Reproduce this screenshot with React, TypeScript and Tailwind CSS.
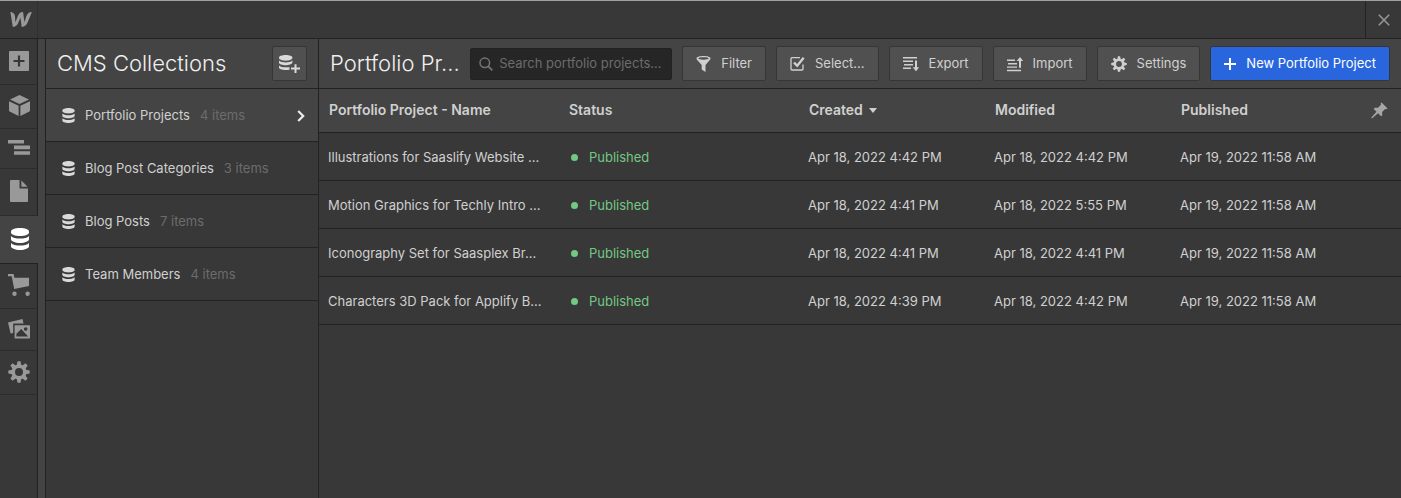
import React from 'react';

interface IconProps {
    className?: string;
}

interface Collection {
    name: string;
    count: number;
    active?: boolean;
}

interface Project {
    name: string;
    status: string;
    created: string;
    modified: string;
    published: string;
}

const collections: Collection[] = [
    { name: 'Portfolio Projects', count: 4, active: true },
    { name: 'Blog Post Categories', count: 3 },
    { name: 'Blog Posts', count: 7 },
    { name: 'Team Members', count: 4 },
];

const projects: Project[] = [
    { name: 'Illustrations for Saaslify Website ...', status: 'Published', created: 'Apr 18, 2022 4:42 PM', modified: 'Apr 18, 2022 4:42 PM', published: 'Apr 19, 2022 11:58 AM' },
    { name: 'Motion Graphics for Techly Intro ...', status: 'Published', created: 'Apr 18, 2022 4:41 PM', modified: 'Apr 18, 2022 5:55 PM', published: 'Apr 19, 2022 11:58 AM' },
    { name: 'Iconography Set for Saasplex Br...', status: 'Published', created: 'Apr 18, 2022 4:41 PM', modified: 'Apr 18, 2022 4:41 PM', published: 'Apr 19, 2022 11:58 AM' },
    { name: 'Characters 3D Pack for Applify B...', status: 'Published', created: 'Apr 18, 2022 4:39 PM', modified: 'Apr 18, 2022 4:42 PM', published: 'Apr 19, 2022 11:58 AM' },
];

const LogoIcon = ({ className }: IconProps) => (
    <svg viewBox="0 3.9 24 16.3" fill="currentColor" className={className} aria-hidden="true">
        <path d="M17.803 8.56s-1.917 6.01-2.076 6.512c-.058-.503-1.45-11.156-1.45-11.156-3.24 0-4.967 2.305-5.885 4.74 0 0-2.312 5.989-2.504 6.487-.013-.473-.35-6.429-.35-6.429C5.344 5.733 2.614 3.916.4 3.916l2.667 16.199c3.4-.015 5.23-2.312 6.19-4.742 0 0 2.04-5.29 2.124-5.529.015.228 1.465 10.271 1.465 10.271 3.411 0 5.252-2.152 6.245-4.497l4.783-11.702c-3.372 0-5.138 2.298-6.07 4.644z" />
    </svg>
);

const AddIcon = ({ className }: IconProps) => (
    <svg viewBox="0 0 20 20" fill="currentColor" fillRule="evenodd" className={className} aria-hidden="true">
        <path d="M1 0h18a1 1 0 0 1 1 1v18a1 1 0 0 1-1 1H1a1 1 0 0 1-1-1V1a1 1 0 0 1 1-1zm7.900 4.500v4.400H4.500v2.200h4.400v4.400h2.200v-4.400h4.400V8.900h-4.400V4.500z" />
    </svg>
);

const CubeIcon = ({ className }: IconProps) => (
    <svg viewBox="0 0 21 21" fill="currentColor" className={className} aria-hidden="true">
        <path d="M10.5 0 20 4.500 10.500 9 1 4.500z" />
        <path d="M0 6.200 9.600 10.700V21L.6 16.600Q0 16.300 0 15.600z" />
        <path d="M21 6.200 11.400 10.700V21l9-4.400q.6-.3.6-1z" />
    </svg>
);

const NavigatorIcon = ({ className }: IconProps) => (
    <svg viewBox="0 0 22 15" fill="currentColor" className={className} aria-hidden="true">
        <path d="M0 0h16v3.600H0zM6 5.600h16v3.600H6zM6 11.200h16v3.600H6z" />
    </svg>
);

const PageIcon = ({ className }: IconProps) => (
    <svg viewBox="0 0 18 22" fill="currentColor" className={className} aria-hidden="true">
        <path d="M1 0h8.500v8.500H18V21a1 1 0 0 1-1 1H1a1 1 0 0 1-1-1V1a1 1 0 0 1 1-1z" />
        <path d="M11.400.5 17.600 6.700h-6.200z" />
    </svg>
);

const DatabaseIcon = ({ className }: IconProps) => (
    <svg viewBox="0 0 18 22" fill="currentColor" className={className} aria-hidden="true">
        <path d="M0 3.500C0 1.500 4 0 9 0s9 1.500 9 3.500v1C18 6.500 14 8 9 8S0 6.500 0 4.500z" />
        <path d="M0 8c1.500 1.800 5 2.600 9 2.600s7.500-.8 9-2.600v3.300c0 2-4 3.700-9 3.700s-9-1.700-9-3.700z" />
        <path d="M0 15c1.500 1.800 5 2.600 9 2.600s7.500-.8 9-2.600v3.300c0 2-4 3.700-9 3.700s-9-1.700-9-3.700z" />
    </svg>
);

const CartIcon = ({ className }: IconProps) => (
    <svg viewBox="0 0 22 22" fill="currentColor" className={className} aria-hidden="true">
        <path d="M0 0h5.600l.8 3.700H21V12L6.200 15 3.700 2.200H0z" />
        <circle cx="6.5" cy="19.7" r="2.2" />
        <circle cx="19.6" cy="19.7" r="2.2" />
    </svg>
);

const AssetsIcon = ({ className }: IconProps) => (
    <svg viewBox="0 0 22 20" fill="currentColor" className={className} aria-hidden="true">
        <path d="M0 3.500 14.500 0l1 4.500H5.200v9.500l-2.600.5z" />
        <path fillRule="evenodd" d="M7.200 6.200h14.200q.6 0 .6.600v12q0 .6-.6.600H7.200q-.6 0-.6-.6v-12q0-.6.6-.6zM8.400 17.600h11.800l-7-7.600-4.800 4.800zM17.700 8.300a1.800 1.800 0 1 0 0 3.600 1.800 1.800 0 0 0 0-3.600z" />
    </svg>
);

const GearIcon = ({ className }: IconProps) => (
    <svg viewBox="0 0 22 22" fill="currentColor" className={className} aria-hidden="true">
        <circle cx="11" cy="11" r="5.8" fill="none" stroke="currentColor" strokeWidth="3.6" />
        {[0, 45, 90, 135, 180, 225, 270, 315].map((angle) => (
            <path key={angle} d="M9.500.3h3l.8 4.200H8.700z" transform={`rotate(${angle} 11 11)`} />
        ))}
    </svg>
);

const DatabaseAddIcon = ({ className }: IconProps) => (
    <svg viewBox="0 0 21 18" fill="currentColor" className={className} aria-hidden="true">
        <path d="M0 2.600C0 1.100 3 0 6.700 0s6.700 1.100 6.700 2.600v.5c0 1.500-3 2.600-6.700 2.600S0 4.600 0 3.100z" />
        <path d="M0 5.600c1.500 1.400 4 1.900 6.700 1.900s5.200-.5 6.700-1.900v2.200c-.6 1.600-3.500 2.500-6.700 2.500S0 9.300 0 7.800z" />
        <path d="M0 10.400c1.500 1.400 4 1.900 6.700 1.900h3.800v2.500c-1 .2-2.400.3-3.800.3-3.700 0-6.700-1-6.700-2.500z" />
        <path d="M15.500 9.300h2v3.300h3.500v2h-3.500V18h-2v-3.400H12v-2h3.500z" />
    </svg>
);

const SearchIcon = ({ className }: IconProps) => (
    <svg viewBox="0 0 14 14" fill="none" stroke="currentColor" strokeWidth="1.5" className={className} aria-hidden="true">
        <circle cx="5.8" cy="5.8" r="4.8" />
        <path d="m9.300 9.300 4 4" strokeWidth="1.8" />
    </svg>
);

const FilterIcon = ({ className }: IconProps) => (
    <svg viewBox="0 0 14 16" fill="currentColor" className={className} aria-hidden="true">
        <path fillRule="evenodd" d="M7 0c3.900 0 7 .9 7 2.400 0 .7-.5 1.400-1.200 2.200L9 9v7l-3.800-2.400V9L1.200 4.600C.5 3.800 0 3.100 0 2.400 0 .9 3.100 0 7 0zm0 1.300c-2.900 0-5.200.5-5.200 1.200S4.100 3.700 7 3.700s5.200-.5 5.200-1.200S9.900 1.300 7 1.300z" />
    </svg>
);

const SelectIcon = ({ className }: IconProps) => (
    <svg viewBox="0 0 15 15" fill="none" stroke="currentColor" className={className} aria-hidden="true">
        <path d="M10 1.700H2q-1 0-1 1V13q0 1 1 1h10q1 0 1-1V8.500" strokeWidth="1.3" />
        <path d="m4 6.500 3.200 3.300L13.700 1.800" strokeWidth="2.4" />
    </svg>
);

const ExportIcon = ({ className }: IconProps) => (
    <svg viewBox="0 0 16 16" fill="currentColor" className={className} aria-hidden="true">
        <path d="M0 1h14v1.400H0zM0 4.500h10v1.400H0zM1 8h9v1.400H1zM0 11.500h8v1.400H0z" />
        <path d="M12 4.500h2v6.800h2.200L13 15.300l-3.300-4H12z" />
    </svg>
);

const ImportIcon = ({ className }: IconProps) => (
    <svg viewBox="0 0 16 16" fill="currentColor" className={className} aria-hidden="true">
        <path d="M0 3.600h8V5H0zM1 7h9v1.400H1zM0 10.400h10v1.400H0zM0 13.800h14v1.400H0z" />
        <path d="M12 11.800h2V5h2.200L13 1 9.700 5H12z" />
    </svg>
);

const PlusIcon = ({ className }: IconProps) => (
    <svg viewBox="0 0 12 12" fill="currentColor" className={className} aria-hidden="true">
        <path d="M5 0h2v5h5v2H7v5H5V7H0V5h5z" />
    </svg>
);

const CloseIcon = ({ className }: IconProps) => (
    <svg viewBox="0 0 12 12" fill="none" stroke="currentColor" strokeWidth="1.5" className={className} aria-hidden="true">
        <path d="m.8.8 10.400 10.400M11.200.8.8 11.200" />
    </svg>
);

const ChevronIcon = ({ className }: IconProps) => (
    <svg viewBox="0 0 8 12" fill="none" stroke="currentColor" strokeWidth="2.2" className={className} aria-hidden="true">
        <path d="m1.200 1 5 5-5 5" />
    </svg>
);

const PinIcon = ({ className }: IconProps) => (
    <svg viewBox="0 0 18 18" fill="currentColor" className={className} aria-hidden="true">
        <path d="M11.200.5 17.500 6.800 16.300 7.800 15 7.400 11.800 10.600 11.900 14.200 10.700 15.200 7.500 12 1.200 17.200.2 16.900.6 16.200 5.800 10.300 2.900 7.400 3.900 6.200 7.400 6.200 10.600 3 10.200 1.700z" />
    </svg>
);

const railItems = [
    { label: 'Add elements', icon: <AddIcon className="size-5" />, height: 'h-[46px]' },
    { label: 'Components', icon: <CubeIcon className="size-[21px]" />, height: 'h-11' },
    { label: 'Navigator', icon: <NavigatorIcon className="h-[15px] w-[22px]" />, height: 'h-10' },
    { label: 'Pages', icon: <PageIcon className="h-[22px] w-[18px]" />, height: 'h-[47px]' },
    { label: 'CMS', icon: <DatabaseIcon className="h-[22px] w-[18px]" />, height: 'h-12', active: true },
    { label: 'Ecommerce', icon: <CartIcon className="size-[22px]" />, height: 'h-[45px]' },
    { label: 'Assets', icon: <AssetsIcon className="h-5 w-[22px]" />, height: 'h-[42px]' },
    { label: 'Settings', icon: <GearIcon className="size-[22px]" />, height: 'h-11' },
];

const actions = [
    { label: 'Filter', icon: <FilterIcon className="h-4 w-[15px]" /> },
    { label: 'Select...', icon: <SelectIcon className="size-[15px]" /> },
    { label: 'Export', icon: <ExportIcon className="size-4" /> },
    { label: 'Import', icon: <ImportIcon className="size-4" /> },
    { label: 'Settings', icon: <GearIcon className="size-4" /> },
];

const Rail = () => (
    <nav className="flex w-[38px] flex-none flex-col bg-[#444]">
        {railItems.map((item) => (
            <button
                key={item.label}
                type="button"
                aria-label={item.label}
                className={`flex flex-none items-center justify-center border-b pb-[2px] pl-px ${item.height} ${
                    item.active
                        ? 'border-b-[#222] bg-[#444] text-white'
                        : 'border-r border-r-[#222] border-b-[#2c2c2c] bg-[#383838] text-[#999]'
                }`}
            >
                {item.icon}
            </button>
        ))}
        <div className="flex-1 border-r border-[#222] bg-[#383838]" />
    </nav>
);

const CollectionsPanel = () => (
    <aside className="flex w-[274px] flex-none flex-col border-x border-[#222] bg-[#383838]">
        <header className="flex h-[50px] items-center justify-between border-b border-[#222] bg-[#444] px-[11px]">
            <h2 className="text-[22px] font-light text-[#f0f0f0]">CMS Collections</h2>
            <button
                type="button"
                aria-label="New collection"
                className="flex h-[35px] w-[35px] items-center justify-center rounded-xs border border-[#363636] bg-[#505050] text-[#d9d9d9]"
            >
                <DatabaseAddIcon className="h-[18px] w-[21px]" />
            </button>
        </header>
        <ul>
            {collections.map((c) => (
                <li key={c.name}>
                    <button
                        type="button"
                        className={`flex h-[53px] w-full items-center border-b border-[#222] pt-px pr-[13px] pl-4 text-left text-[13px] ${
                            c.active ? 'bg-[#444]' : 'bg-[#383838]'
                        }`}
                    >
                        <DatabaseIcon className="h-[15px] w-[13px] flex-none text-[#d9d9d9]" />
                        <span className="ml-[10px] text-[#d0d0d0]">{c.name}</span>
                        <span className="ml-[10px] flex-1 text-[#6c6c6c]">{c.count} items</span>
                        {c.active && <ChevronIcon className="h-3 w-2 text-[#ebebeb]" />}
                    </button>
                </li>
            ))}
        </ul>
    </aside>
);

const Toolbar = () => (
    <header className="flex h-[50px] items-center gap-[10px] border-b border-[#222] bg-[#444] px-[11px]">
        <h1 className="min-w-0 flex-1 text-[22px] font-light whitespace-nowrap text-[#f0f0f0]">Portfolio Pr...</h1>
        <label className="flex h-8 w-[202px] flex-none items-center gap-[6px] rounded-xs border border-[#222] bg-[#262626] pl-2 text-[#757575]">
            <SearchIcon className="size-[14px] flex-none" />
            <input
                type="text"
                aria-label="Search portfolio projects"
                placeholder="Search portfolio projects..."
                className="w-full min-w-0 bg-transparent text-[13px] text-[#d9d9d9] outline-none placeholder:text-[#6c6c6c]"
            />
        </label>
        {actions.map((action) => (
            <button
                key={action.label}
                type="button"
                className="flex h-[35px] flex-none items-center gap-[10px] rounded-xs border border-[#363636] bg-[#505050] px-[13px] text-[13px] text-[#d0d0d0]"
            >
                {action.icon}
                {action.label}
            </button>
        ))}
        <button
            type="button"
            className="flex h-[35px] flex-none items-center gap-[10px] rounded-xs border border-[#363636] bg-[#2966dd] px-[13px] text-[13px] text-white"
        >
            <PlusIcon className="size-3" />
            New Portfolio Project
        </button>
    </header>
);

const ProjectsTable = () => (
    <table className="w-full table-fixed border-collapse text-left text-[13px] text-[#d0d0d0]">
        <colgroup>
            <col className="w-[240px]" />
            <col className="w-[240px]" />
            <col className="w-[186px]" />
            <col className="w-[186px]" />
            <col />
        </colgroup>
        <thead className="bg-[#444] text-sm">
            <tr className="h-[43px] border-b border-[#222]">
                <th className="pl-[10px] font-semibold whitespace-nowrap">Portfolio Project - Name</th>
                <th className="pl-[10px] font-semibold">Status</th>
                <th className="pl-[10px] font-semibold" aria-sort="descending">
                    <span className="flex items-center gap-[6px]">
                        Created
                        <svg viewBox="0 0 8 5" fill="currentColor" className="h-[5px] w-2" aria-hidden="true">
                            <path d="M0 0h8L4 5z" />
                        </svg>
                    </span>
                </th>
                <th className="pl-[10px] font-semibold">Modified</th>
                <th className="pr-[13px] pl-[10px] font-semibold">
                    <span className="flex items-center justify-between">
                        Published
                        <button type="button" aria-label="Pin columns" className="text-[#a6a6a6]">
                            <PinIcon className="size-[17px]" />
                        </button>
                    </span>
                </th>
            </tr>
        </thead>
        <tbody>
            {projects.map((p) => (
                <tr key={p.name} className="h-12 border-b border-[#222]">
                    <td className="pt-[3px] pl-[9px] whitespace-nowrap">{p.name}</td>
                    <td className="pt-[3px] pl-3 text-[#73c982]">
                        <span className="flex items-center gap-[11px]">
                            <span className="size-[7px] rounded-full bg-[#73c982]" />
                            {p.status}
                        </span>
                    </td>
                    <td className="pt-[3px] pl-[9px]">{p.created}</td>
                    <td className="pt-[3px] pl-[9px]">{p.modified}</td>
                    <td className="pt-[3px] pl-[9px]">{p.published}</td>
                </tr>
            ))}
        </tbody>
    </table>
);

export default function App() {
    return (
        <div className="flex min-h-screen flex-col border-t border-[#9da3a3] bg-[#383838] font-['Inter',sans-serif] text-[#d0d0d0]">
            <div className="flex h-[38px] flex-none items-stretch justify-between border-b border-[#222]">
                <a href="#" aria-label="Dashboard" className="flex w-[38px] items-center justify-center border-r border-[#303030] pl-1 text-[#999]">
                    <LogoIcon className="h-[15px] w-[22px]" />
                </a>
                <button type="button" aria-label="Close" className="flex w-9 items-center justify-center border-l border-[#222] text-[#999]">
                    <CloseIcon className="size-3" />
                </button>
            </div>
            <div className="flex flex-1">
                <Rail />
                <div className="w-[7px] flex-none bg-[#444]" />
                <CollectionsPanel />
                <main className="min-w-0 flex-1">
                    <Toolbar />
                    <ProjectsTable />
                </main>
            </div>
        </div>
    );
}
